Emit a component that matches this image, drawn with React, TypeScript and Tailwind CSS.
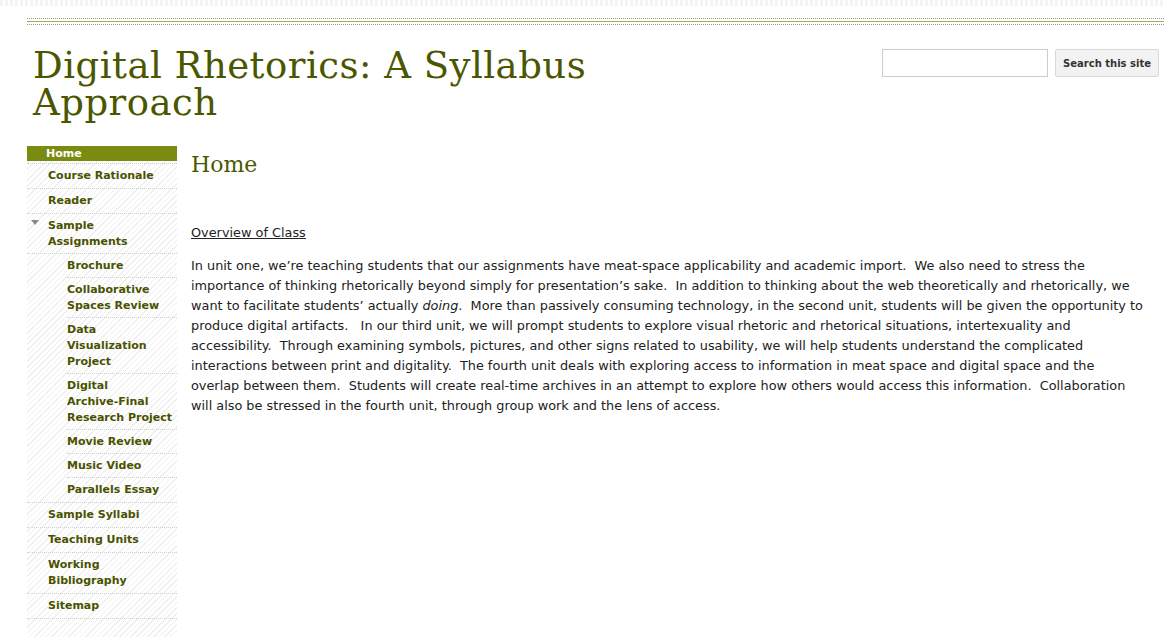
import React from "react";

const olive = "text-[#4b5700]";

type Item = { label: string[]; sub?: boolean; arrow?: boolean; last?: boolean };

const items: Item[] = [
  { label: ["Course Rationale"] },
  { label: ["Reader"] },
  { label: ["Sample", "Assignments"], arrow: true },
  { label: ["Brochure"], sub: true },
  { label: ["Collaborative", "Spaces Review"], sub: true },
  { label: ["Data", "Visualization", "Project"], sub: true },
  { label: ["Digital", "Archive-Final", "Research Project"], sub: true },
  { label: ["Movie Review"], sub: true },
  { label: ["Music Video"], sub: true },
  { label: ["Parallels Essay"], sub: true, last: true },
  { label: ["Sample Syllabi"] },
  { label: ["Teaching Units"] },
  { label: ["Working", "Bibliography"] },
  { label: ["Sitemap"] },
];

const lines = [
  <>In unit one, we’re teaching students that our assignments have meat-space applicability and academic import.&nbsp; We also need to stress the</>,
  <>importance of thinking rhetorically beyond simply for presentation’s sake.&nbsp; In addition to thinking about the web theoretically and rhetorically, we</>,
  <>want to facilitate students’ actually <em>doing</em>.&nbsp; More than passively consuming technology, in the second unit, students will be given the opportunity to</>,
  <>produce digital artifacts.&nbsp;&nbsp; In our third unit, we will prompt students to explore visual rhetoric and rhetorical situations, intertexuality and</>,
  <>accessibility.&nbsp; Through examining symbols, pictures, and other signs related to usability, we will help students understand the complicated</>,
  <>interactions between print and digitality.&nbsp; The fourth unit deals with exploring access to information in meat space and digital space and the</>,
  <>overlap between them.&nbsp; Students will create real-time archives in an attempt to explore how others would access this information.&nbsp; Collaboration</>,
  <>will also be stressed in the fourth unit, through group work and the lens of access.</>,
];

export default function App() {
  return (
    <div className="w-[1164px] h-[642px] bg-white overflow-hidden font-['DejaVu_Sans',sans-serif]">
      <div className="h-[6px] bg-[repeating-linear-gradient(90deg,#f4f4f4_0px,#f4f4f4_3px,#ffffff_3px,#ffffff_5px)]" />
      <div className="pl-[27px]">
        <div className="mt-[12px] border-t border-dotted border-[#999]" />
        <div className="mt-[2px] h-[1px] bg-[#9fb04f]" />
        <div className="mt-[2px] border-t border-dotted border-[#999]" />
        <div className="flex justify-between pr-[5px]">
          <h1 className={`pl-[6px] pt-[22px] font-['DejaVu_Serif',serif] text-[37px] leading-[37px] ${olive} tracking-[0.5px]`}>
            <div>Digital Rhetorics: A Syllabus</div>
            <div>Approach</div>
          </h1>
          <div className="flex gap-[7px] pt-[24px] items-start">
            <input className="w-[166px] h-[28px] border border-[#cccccc] bg-white" />
            <button className="h-[28px] w-[104px] border border-[#d8d8d8] bg-[#f2f2f2] rounded-[2px] text-[10px] font-bold text-[#333]">
              Search this site
            </button>
          </div>
        </div>
        <div className="flex mt-[25px] gap-[14px]">
          <nav className="w-[150px] h-[491px] bg-[repeating-linear-gradient(135deg,#efefef_0px,#efefef_1px,#ffffff_1px,#ffffff_4px)] text-[11px] font-bold leading-[16px] text-[#4a5200]">
            <div className="pb-[2px] border-b border-dotted border-[#ccc]">
              <div className="h-[15px] bg-[#7a8c10] text-white pl-[19px] leading-[15px]">Home</div>
            </div>
            {items.map((it, i) => (
              <div key={i} className={it.sub ? "pl-[40px]" : ""}>
                <div
                  className={`relative pt-[4px] ${it.sub || it.arrow ? "pb-[3px]" : "pb-[4px]"} border-b border-dotted ${it.last ? "border-transparent" : "border-[#d0d0d0]"} ${it.sub ? "" : "pl-[21px]"}`}
                >
                  {it.arrow && (
                    <span className="absolute left-[4px] top-[6px] w-0 h-0 border-l-[4px] border-r-[4px] border-t-[5px] border-l-transparent border-r-transparent border-t-[#888]" />
                  )}
                  {it.label.map((l, j) => (
                    <div key={j}>{l}</div>
                  ))}
                </div>
                {it.last && <div className="-ml-[40px] border-b border-dotted border-[#d0d0d0]" />}
              </div>
            ))}
          </nav>
          <main className="flex-1">
            <h2 className={`font-['DejaVu_Serif',serif] text-[22px] leading-[26px] ${olive} pt-[6px]`}>Home</h2>
            <div className="mt-[45px] text-[12.85px] text-[#222]">
              <div className="underline leading-[20px]">Overview of Class</div>
              <div className="mt-[13px] leading-[20px] whitespace-nowrap">
                {lines.map((l, i) => (
                  <div key={i}>{l}</div>
                ))}
              </div>
            </div>
          </main>
        </div>
      </div>
    </div>
  );
}
